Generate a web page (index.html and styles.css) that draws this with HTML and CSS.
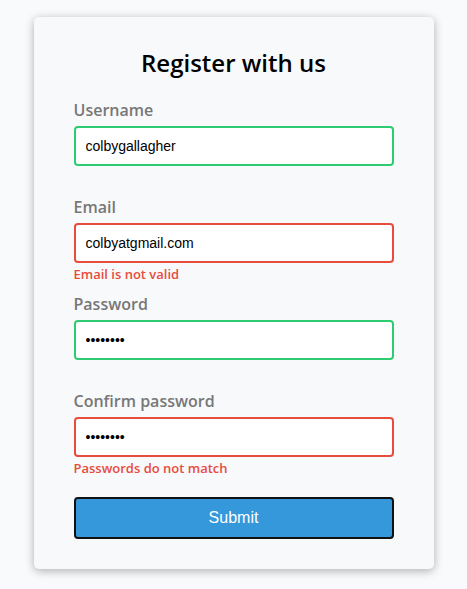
FILE: index.html
```html
<!DOCTYPE html>
<html lang="en">
<head>
<meta charset="UTF-8">
<title>Form Validator</title>
<link rel="stylesheet" href="styles.css">
</head>
<body>
<div class="container">
  <form class="form">
    <h2>Register with us</h2>
    <div class="form-control success">
      <label for="username">Username</label>
      <input type="text" id="username" value="colbygallagher">
      <small>Error message</small>
    </div>
    <div class="form-control error">
      <label for="email">Email</label>
      <input type="text" id="email" value="colbyatgmail.com">
      <small>Email is not valid</small>
    </div>
    <div class="form-control success">
      <label for="password">Password</label>
      <input type="password" id="password" value="password">
      <small>Error message</small>
    </div>
    <div class="form-control error">
      <label for="password2">Confirm password</label>
      <input type="password" id="password2" value="passwor1">
      <small>Passwords do not match</small>
    </div>
    <button type="button" class="submit">Submit</button>
  </form>
</div>
</body>
</html>
```

FILE: styles.css
```css
* { box-sizing: border-box; }
body {
  background-color: #f9fafb;
  font-family: "Open Sans", sans-serif;
  display: flex;
  align-items: center;
  justify-content: center;
  min-height: 100vh;
  margin: 0;
  padding-bottom: 4px;
}
.container {
  background-color: #f8f9fb;
  border-radius: 5px;
  box-shadow: 0 2px 10px rgba(0, 0, 0, 0.3);
  width: 400px;
}
.form { padding: 30px 40px; }
h2 {
  text-align: center;
  margin: 0 0 20px;
  font-size: 24px;
  line-height: 32px;
  font-weight: 600;
  color: #000;
}
.form-control {
  margin-bottom: 10px;
  padding-bottom: 20px;
  position: relative;
}
.form-control label {
  color: #777;
  display: block;
  margin-bottom: 5px;
  font-size: 16px;
  font-weight: 600;
}
.form-control input {
  border: 2px solid #f0f0f0;
  border-radius: 4px;
  display: block;
  width: 100%;
  padding: 10px;
  font-size: 14px;
  font-family: "Liberation Sans", Arial, sans-serif;
  background: #fff;
  color: #000;
  outline: none;
}
.form-control.success input { border-color: #2ecc71; }
.form-control.error input { border-color: #e74c3c; }
.form-control small {
  color: #e74c3c;
  position: absolute;
  bottom: 0;
  left: 0;
  font-size: 13px;
  font-weight: 600;
  visibility: hidden;
}
.form-control.error small { visibility: visible; }
.submit {
  background-color: #3498db;
  border: 2px solid #111;
  border-radius: 4px;
  color: #fff;
  display: block;
  font-size: 16px;
  font-family: "Liberation Sans", Arial, sans-serif;
  padding: 10px;
  margin-top: 20px;
  width: 100%;
}
```
